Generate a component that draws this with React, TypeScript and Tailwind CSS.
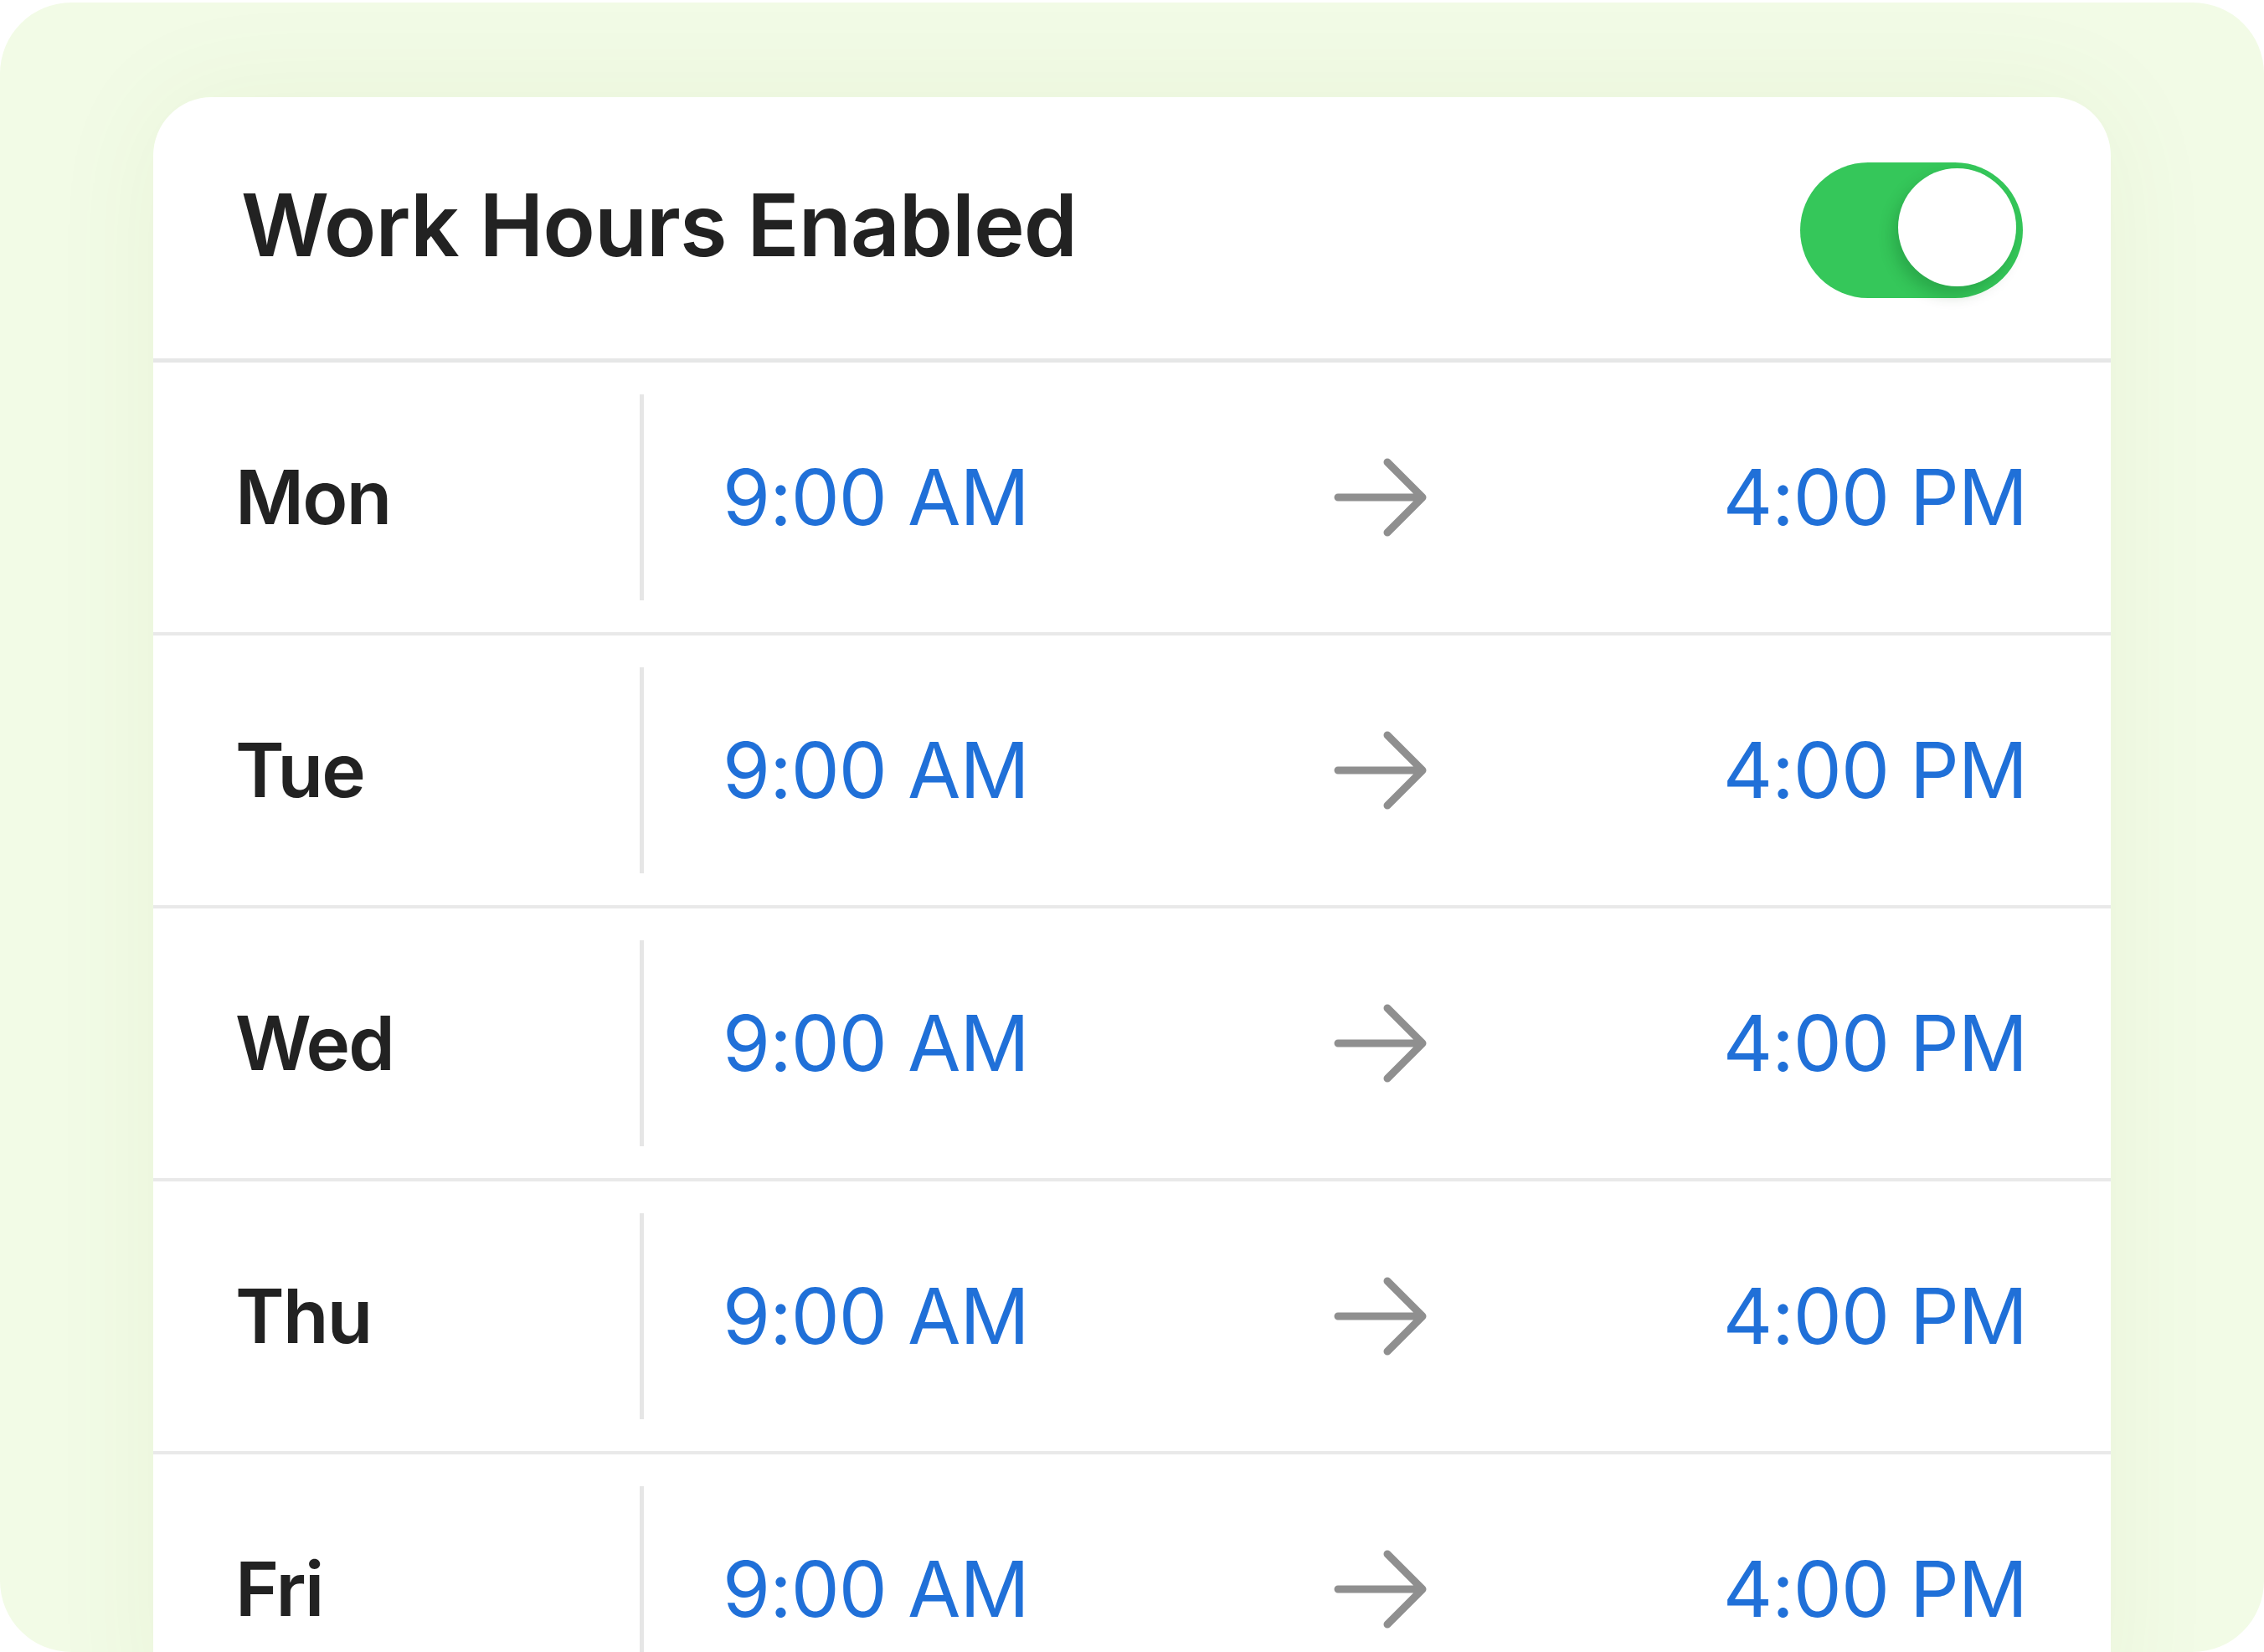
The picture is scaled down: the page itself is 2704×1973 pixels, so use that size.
import React from "react";

const days = ["Mon", "Tue", "Wed", "Thu", "Fri"];

function ArrowRight() {
  return (
    <svg width="112" height="94" viewBox="0 0 112 94" fill="none" className="ml-[12px]">
      <path
        d="M5 47 H106 M64 5 L106 47 L64 89"
        stroke="#8f8f8f"
        strokeWidth="9"
        strokeLinecap="round"
        strokeLinejoin="round"
      />
    </svg>
  );
}

function Toggle() {
  return (
    <div className="relative mt-[6px] w-[266px] h-[162px] rounded-full bg-[#35c75a]">
      <div className="absolute right-[8px] top-[7px] w-[141px] h-[141px] rounded-full bg-white shadow-[-6px_10px_18px_rgba(0,60,20,0.22)]" />
    </div>
  );
}

function DayRow({ day }: { day: string }) {
  return (
    <div className="flex items-center h-[326px] border-b-[4px] border-[#e9e9e9]">
      <div className="w-[581px] pl-[98px] text-[89px] font-semibold text-[#222222] tracking-[-0.02em]">
        {day}
      </div>
      <div className="w-[5px] h-[246px] bg-[#e6e6e6]" />
      <div className="flex-1 flex items-center justify-between pl-[94px] pr-[100px] text-[92px] text-[#2070d8] tracking-[-0.01em]">
        <span>9:00 AM</span>
        <ArrowRight />
        <span>4:00 PM</span>
      </div>
    </div>
  );
}

export default function App() {
  return (
    <div className="w-[2704px] h-[1973px] bg-white overflow-hidden" style={{ fontFamily: "Inter, 'Noto Sans', sans-serif" }}>
      <div className="mt-[3px] h-[1970px] rounded-[85px] overflow-hidden bg-[#f2fbe6] px-[183px] pt-[113px]">
        <div className="bg-white rounded-t-[70px] shadow-[0_0_140px_rgba(90,130,40,0.06)]">
          <div className="flex items-center justify-between h-[312px] pl-[105px] pr-[105px]">
            <h1 className="mb-[8px] text-[103px] font-semibold text-[#222222] tracking-[-0.01em] leading-none">
              Work Hours Enabled
            </h1>
            <Toggle />
          </div>
          <div className="h-[5px] bg-[#e6e7e7]" />
          {days.map((d) => (
            <DayRow key={d} day={d} />
          ))}
        </div>
      </div>
    </div>
  );
}
